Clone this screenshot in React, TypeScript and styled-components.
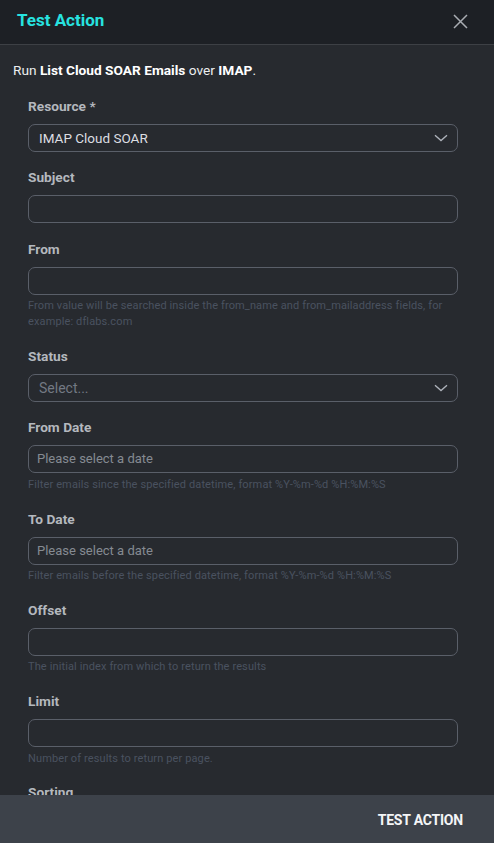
import React from "react";
import styled, { createGlobalStyle } from "styled-components";

const Global = createGlobalStyle`
  html, body { margin: 0; padding: 0; height: 100%; background: #272a2f; }
  #root { height: 100%; }
  * { box-sizing: border-box; }
`;

const Shell = styled.div`
  height: 100vh;
  display: flex;
  flex-direction: column;
  background: #272a2f;
  font-family: Roboto, "Liberation Sans", sans-serif;
  overflow: hidden;
`;

const Header = styled.header`
  flex: none;
  height: 45px;
  display: flex;
  align-items: center;
  justify-content: space-between;
  padding: 0 26px 0 17px;
  background: #1d2025;
  border-bottom: 1px solid #3d4045;
`;

const Title = styled.h1`
  margin: 0;
  font-size: 17px;
  font-weight: 700;
  color: #27e3e0;
  line-height: 20px;
  margin-top: -4px;
`;

const CloseButton = styled.button`
  border: 0;
  background: none;
  padding: 0;
  width: 16px;
  height: 16px;
  display: flex;
  align-items: center;
  justify-content: center;
  cursor: pointer;
  margin-top: -2px;
`;

const Body = styled.main`
  flex: 1;
  overflow: hidden;
  padding: 15px 13px 0 13px;
`;

const Intro = styled.p`
  margin: 0 0 17.7px 0;
  font-size: 13.7px;
  line-height: 20px;
  color: #eceef0;
  b { font-weight: 700; color: #ffffff; }
`;

const Form = styled.div`
  display: flex;
  flex-direction: column;
  gap: 17.5px;
  padding: 0 23px 0 15px;
`;

const Field = styled.div`
  display: flex;
  flex-direction: column;
`;

const Label = styled.label`
  font-size: 13.7px;
  font-weight: 700;
  line-height: 16px;
  color: #b4b8be;
  margin-bottom: 10px;
`;

const Box = styled.div<{ $pad?: number }>`
  height: 28px;
  border: 1px solid #5a5f69;
  border-radius: 7px;
  display: flex;
  align-items: center;
  justify-content: space-between;
  padding: 0 9px 0 ${(p) => p.$pad ?? 9}px;
  background: #272a2f;
`;

const Value = styled.span<{ $tone: "value" | "placeholder" | "date" }>`
  font-size: ${(p) => (p.$tone === "date" ? 13 : p.$tone === "value" ? 13.5 : 14)}px;
  color: ${(p) =>
    p.$tone === "value" ? "#dcdee2" : p.$tone === "date" ? "#858a92" : "#737983"};
  line-height: 16px;
`;

const Help = styled.div`
  margin-top: 3.7px;
  font-size: 11px;
  letter-spacing: 0.12px;
  line-height: 16px;
  color: #4a5260;
`;

const Footer = styled.footer`
  flex: none;
  height: 48px;
  background: #3d424a;
  display: flex;
  align-items: center;
  justify-content: flex-end;
  padding: 0 31px 0 0;
`;

const ActionButton = styled.button`
  border: 0;
  background: none;
  padding: 0;
  font-family: Roboto, "Liberation Sans", sans-serif;
  font-size: 14px;
  font-weight: 700;
  letter-spacing: -0.2px;
  color: #f4f5f7;
  cursor: pointer;
  margin-top: 1px;
`;

const Chevron = () => (
  <svg width="14" height="8" viewBox="0 0 14 8" fill="none">
    <path d="M1 1.2 L7 6.6 L13 1.2" stroke="#aeb3bb" strokeWidth="1.3" />
  </svg>
);

const CloseIcon = () => (
  <svg width="15" height="15" viewBox="0 0 15 15" fill="none">
    <path d="M1 1 L14 14 M14 1 L1 14" stroke="#a9adb3" strokeWidth="1.5" />
  </svg>
);

type FieldDef = {
  label: string;
  kind: "select" | "input" | "date";
  value?: string;
  placeholder?: string;
  help?: string[];
};

const fields: FieldDef[] = [
  { label: "Resource *", kind: "select", value: "IMAP Cloud SOAR" },
  { label: "Subject", kind: "input" },
  {
    label: "From",
    kind: "input",
    help: [
      "From value will be searched inside the from_name and from_mailaddress fields, for",
      "example: dflabs.com",
    ],
  },
  { label: "Status", kind: "select", placeholder: "Select..." },
  {
    label: "From Date",
    kind: "date",
    placeholder: "Please select a date",
    help: ["Filter emails since the specified datetime, format %Y-%m-%d %H:%M:%S"],
  },
  {
    label: "To Date",
    kind: "date",
    placeholder: "Please select a date",
    help: ["Filter emails before the specified datetime, format %Y-%m-%d %H:%M:%S"],
  },
  { label: "Offset", kind: "input", help: ["The initial index from which to return the results"] },
  { label: "Limit", kind: "input", help: ["Number of results to return per page."] },
  { label: "Sorting", kind: "select", placeholder: "Select..." },
];

export default function App() {
  return (
    <>
      <Global />
      <Shell>
        <Header>
          <Title>Test Action</Title>
          <CloseButton aria-label="Close">
            <CloseIcon />
          </CloseButton>
        </Header>
        <Body>
          <Intro>
            Run <b>List Cloud SOAR Emails</b> over <b>IMAP</b>.
          </Intro>
          <Form>
            {fields.map((f) => (
              <Field key={f.label}>
                <Label>{f.label}</Label>
                <Box $pad={f.kind === "date" ? 8 : 10}>
                  {f.value ? (
                    <Value $tone="value">{f.value}</Value>
                  ) : f.placeholder ? (
                    <Value $tone={f.kind === "date" ? "date" : "placeholder"}>{f.placeholder}</Value>
                  ) : (
                    <span />
                  )}
                  {f.kind === "select" && <Chevron />}
                </Box>
                {f.help && (
                  <Help>
                    {f.help.map((h) => (
                      <div key={h}>{h}</div>
                    ))}
                  </Help>
                )}
              </Field>
            ))}
          </Form>
        </Body>
        <Footer>
          <ActionButton>TEST ACTION</ActionButton>
        </Footer>
      </Shell>
    </>
  );
}
